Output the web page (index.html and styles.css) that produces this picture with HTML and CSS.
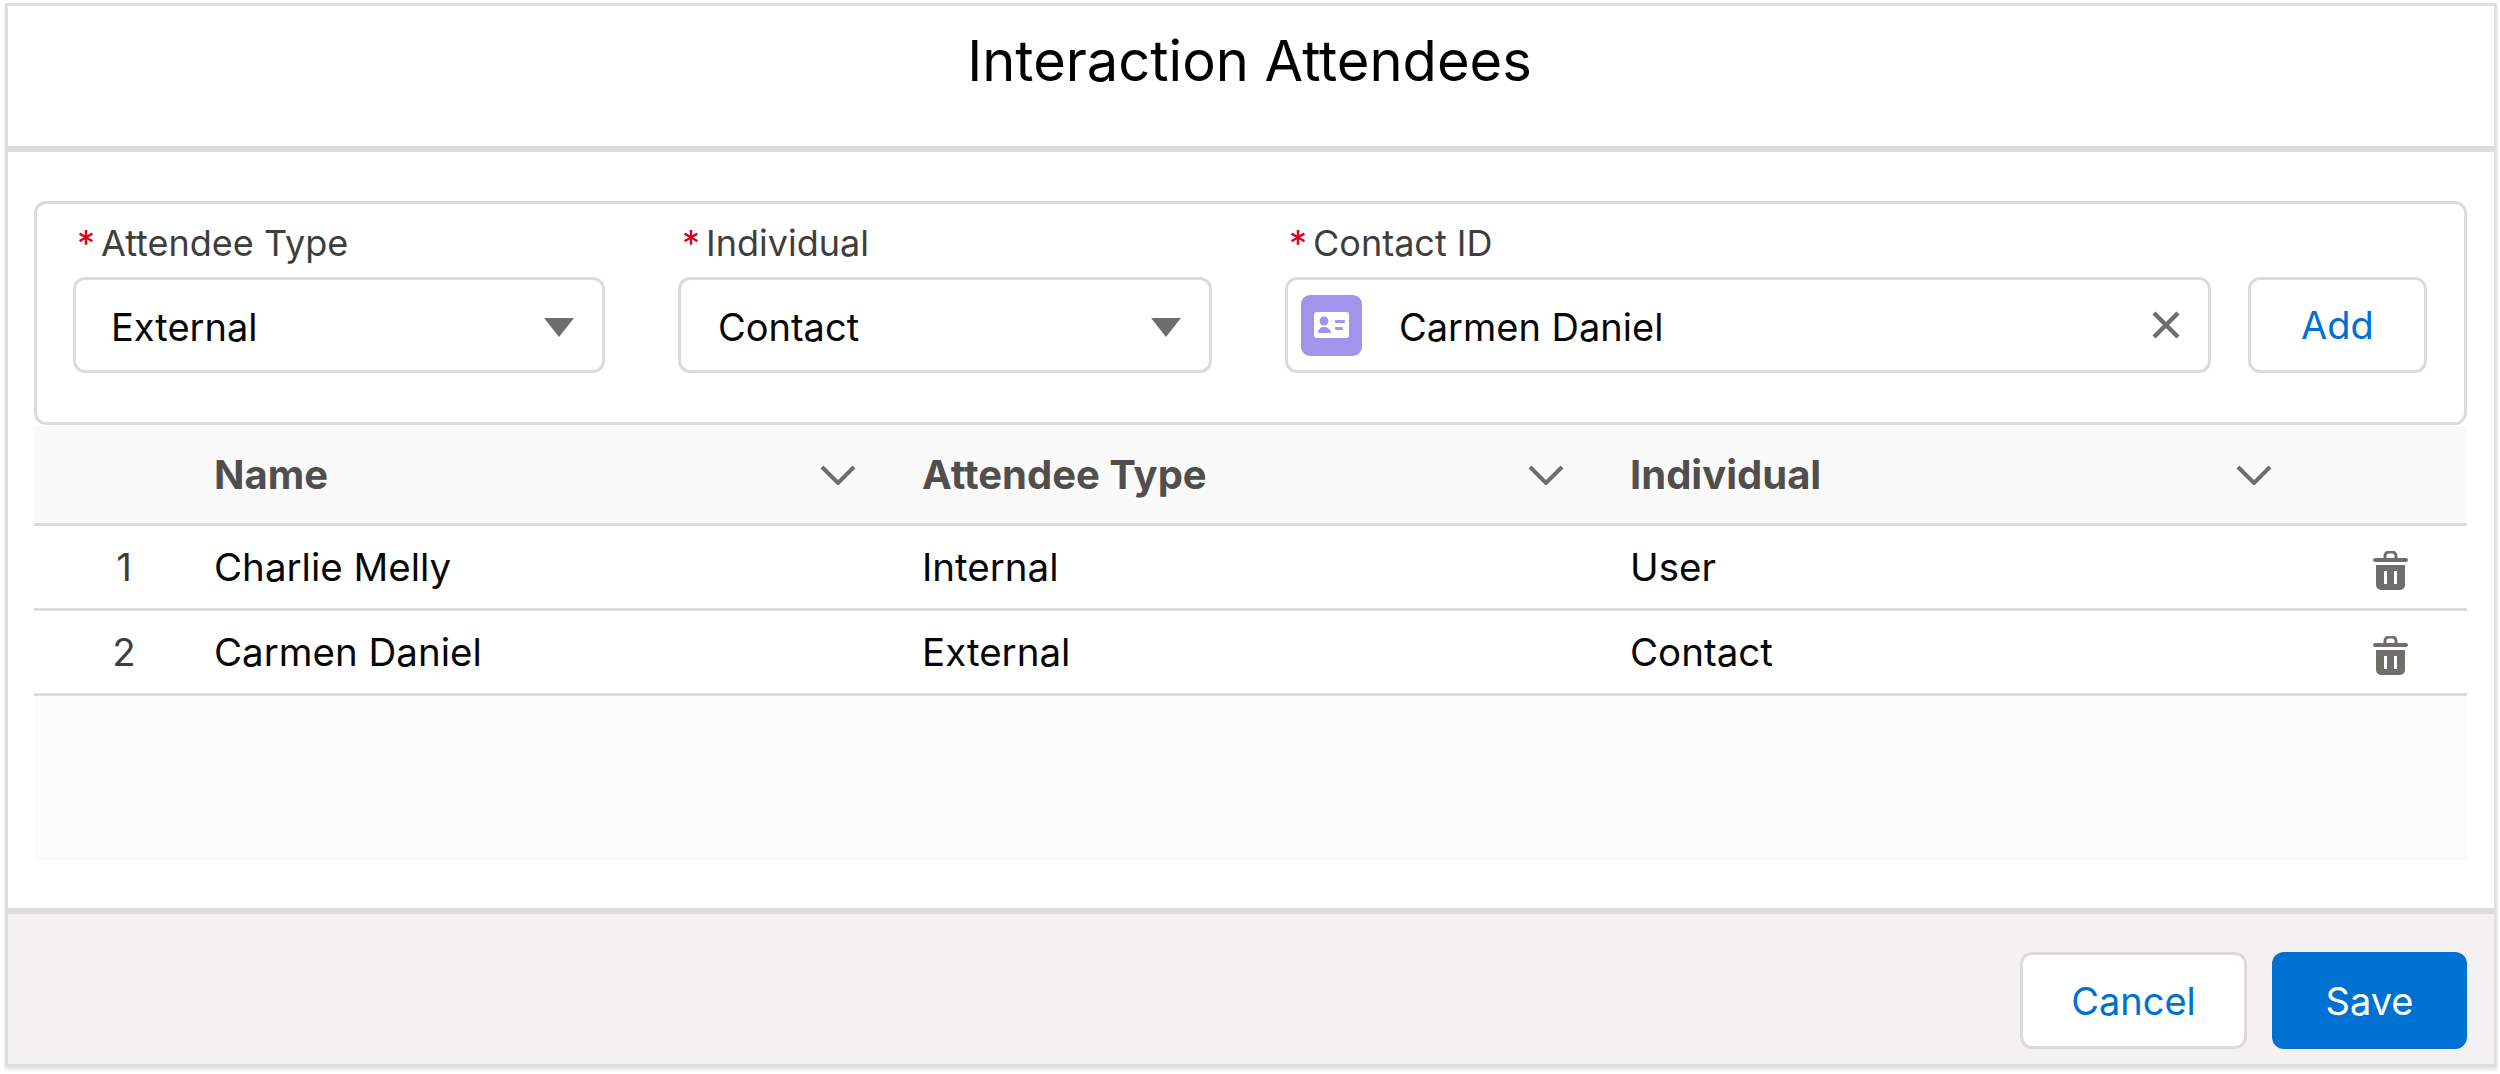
FILE: index.html
```html
<!DOCTYPE html>
<html lang="en">
<head>
<meta charset="utf-8">
<title>Interaction Attendees</title>
<link rel="stylesheet" href="styles.css">
</head>
<body>
<div class="modal">
  <header class="modal-head"><h1>Interaction Attendees</h1></header>
  <main class="modal-body">
    <section class="card">
      <div class="field f-type">
        <label><span class="req">*</span>Attendee Type</label>
        <div class="input"><span>External</span><svg class="caret" viewBox="0 0 32 20"><path d="M1 1h30L16 20z"/></svg></div>
      </div>
      <div class="field f-ind">
        <label><span class="req">*</span>Individual</label>
        <div class="input"><span>Contact</span><svg class="caret" viewBox="0 0 32 20"><path d="M1 1h30L16 20z"/></svg></div>
      </div>
      <div class="field f-id">
        <label><span class="req">*</span>Contact ID</label>
        <div class="input lookup">
          <svg class="tile" viewBox="0 0 61 61"><rect width="61" height="61" rx="9" fill="#a094ed"/><rect x="13" y="17" width="35" height="26" rx="3" fill="#fff"/><circle cx="23" cy="26" r="4.5" fill="#a094ed"/><path d="M17 38c0-4 3-5 4-6h4c1 1 5 2 5 6z" fill="#a094ed"/><rect x="34" y="25" width="10" height="3" rx="1" fill="#a094ed"/><rect x="34" y="32" width="8" height="3" rx="1" fill="#a094ed"/></svg>
          <span class="lookup-name">Carmen Daniel</span>
          <svg class="clear" viewBox="0 0 30 30"><path d="M3 3l24 24M27 3L3 27"/></svg>
        </div>
      </div>
      <button class="btn btn-add">Add</button>
    </section>
    <section class="table">
      <div class="tr th">
        <div></div>
        <div class="hc"><span>Name</span><svg class="chev" viewBox="0 0 36 20"><path d="M2 2l16 16L34 2"/></svg></div>
        <div class="hc"><span>Attendee Type</span><svg class="chev" viewBox="0 0 36 20"><path d="M2 2l16 16L34 2"/></svg></div>
        <div class="hc"><span>Individual</span><svg class="chev" viewBox="0 0 36 20"><path d="M2 2l16 16L34 2"/></svg></div>
        <div></div>
      </div>
      <div class="tr td">
        <div class="num">1</div><div>Charlie Melly</div><div>Internal</div><div>User</div>
        <div class="act"><svg class="trash" viewBox="0 0 35 40"><path d="M12 8V5a4 4 0 0 1 4-4h3a4 4 0 0 1 4 4v3" fill="none" stroke="#706e6b" stroke-width="3"/><rect y="7" width="35" height="4" rx="2"/><path fill-rule="evenodd" d="M3 14h29v20a5 5 0 0 1-5 5H8a5 5 0 0 1-5-5zM11 20v13h3V20zM21 20v13h3V20z"/></svg></div>
      </div>
      <div class="tr td">
        <div class="num">2</div><div>Carmen Daniel</div><div>External</div><div>Contact</div>
        <div class="act"><svg class="trash" viewBox="0 0 35 40"><path d="M12 8V5a4 4 0 0 1 4-4h3a4 4 0 0 1 4 4v3" fill="none" stroke="#706e6b" stroke-width="3"/><rect y="7" width="35" height="4" rx="2"/><path fill-rule="evenodd" d="M3 14h29v20a5 5 0 0 1-5 5H8a5 5 0 0 1-5-5zM11 20v13h3V20zM21 20v13h3V20z"/></svg></div>
      </div>
      <div class="empty"></div>
    </section>
  </main>
  <footer class="modal-foot">
    <button class="btn btn-cancel">Cancel</button>
    <button class="btn btn-save">Save</button>
  </footer>
</div>
</body>
</html>
```

FILE: styles.css
```css
* { box-sizing: border-box; }
html, body { margin: 0; height: 100%; background: #fff; }
body {
  padding: 3px 3px 0 5px;
  font-family: Inter, "Liberation Sans", sans-serif;
  color: #080707;
  overflow: hidden;
}
.modal {
  height: 1064px;
  display: flex;
  flex-direction: column;
  border: 3px solid #dfdfdf;
  box-shadow: 0 3px 3px #e4e4e4;
}
.modal-head {
  height: 146px;
  border-bottom: 6px solid #dcdcdc;
  display: flex;
  justify-content: center;
  padding: 21px 3px 0 0;
}
.modal-head h1 {
  margin: 0;
  font-size: 56px;
  font-weight: 400;
  line-height: 68px;
  color: #000;
}
.modal-body {
  flex: 1;
  padding: 49px 27px 0 26px;
  background: #fff;
}
.card {
  height: 224px;
  border: 3px solid #dddbda;
  border-radius: 12px;
  padding: 0 35px 0 36px;
  display: flex;
  gap: 73px;
  align-items: flex-start;
}
.field { display: flex; flex-direction: column; }
.f-type { width: 532px; }
.f-ind { width: 534px; }
.f-id { width: 926px; }
label {
  font-size: 36px;
  line-height: 42px;
  height: 73px;
  padding-top: 18px;
  padding-left: 4px;
  color: #3e3e3c;
  display: block;
}
.req { color: #d8001f; margin-right: 6px; }
.input {
  height: 96px;
  border: 3px solid #dddbda;
  border-radius: 12px;
  background: #fff;
  display: flex;
  align-items: center;
  justify-content: space-between;
  padding: 3px 27px 0 35px;
  font-size: 38px;
}
.f-ind .input { padding-left: 37px; }
.caret { width: 32px; height: 20px; fill: #706e6b; flex: none; }
.lookup { padding: 0 27px 0 13px; justify-content: flex-start; }
.lookup-name { margin-left: 37px; flex: 1; padding-top: 3px; }
.tile { width: 61px; height: 61px; flex: none; }
.clear { width: 30px; height: 30px; fill: none; stroke: #706e6b; stroke-width: 4.5; flex: none; }
.btn {
  font-family: inherit;
  font-size: 38px;
  border-radius: 12px;
  cursor: pointer;
}
.btn-add {
  width: 179px;
  height: 96px;
  margin: 73px 0 0 -36px;
  background: #fff;
  border: 3px solid #dddbda;
  color: #0070d2;
}
.table { margin-top: 1px; }
.tr {
  display: grid;
  grid-template-columns: 180px 708px 708px 708px 1fr;
  align-items: center;
  border-bottom: 3px solid #dddbda;
  height: 85px;
  font-size: 38.5px;
}
.th {
  height: 100px;
  background: #fafafa;
  color: #514f4d;
  font-size: 40px;
  font-weight: 700;
}
.hc {
  display: flex;
  justify-content: space-between;
  align-items: center;
  padding-right: 66px;
}
.chev { width: 36px; height: 20px; fill: none; stroke: #706e6b; stroke-width: 4; flex: none; }
.num { text-align: center; color: #3e3e3c; }
.act { padding-left: 35px; display: flex; padding-top: 8px; }
.trash { width: 35px; height: 40px; fill: #706e6b; }
.empty { height: 164px; background: #fbfbfb; }
.modal-foot {
  height: 156px;
  flex: none;
  border-top: 6px solid #dcdcdc;
  background: #f3f1f2;
  display: flex;
  justify-content: flex-end;
  gap: 25px;
  padding: 38px 27px 0 0;
}
.btn-cancel {
  width: 227px;
  height: 97px;
  background: #fff;
  border: 3px solid #dddbda;
  color: #0070d2;
}
.btn-save {
  width: 195px;
  height: 97px;
  background: #0070d2;
  border: 0;
  color: #fff;
}
```
